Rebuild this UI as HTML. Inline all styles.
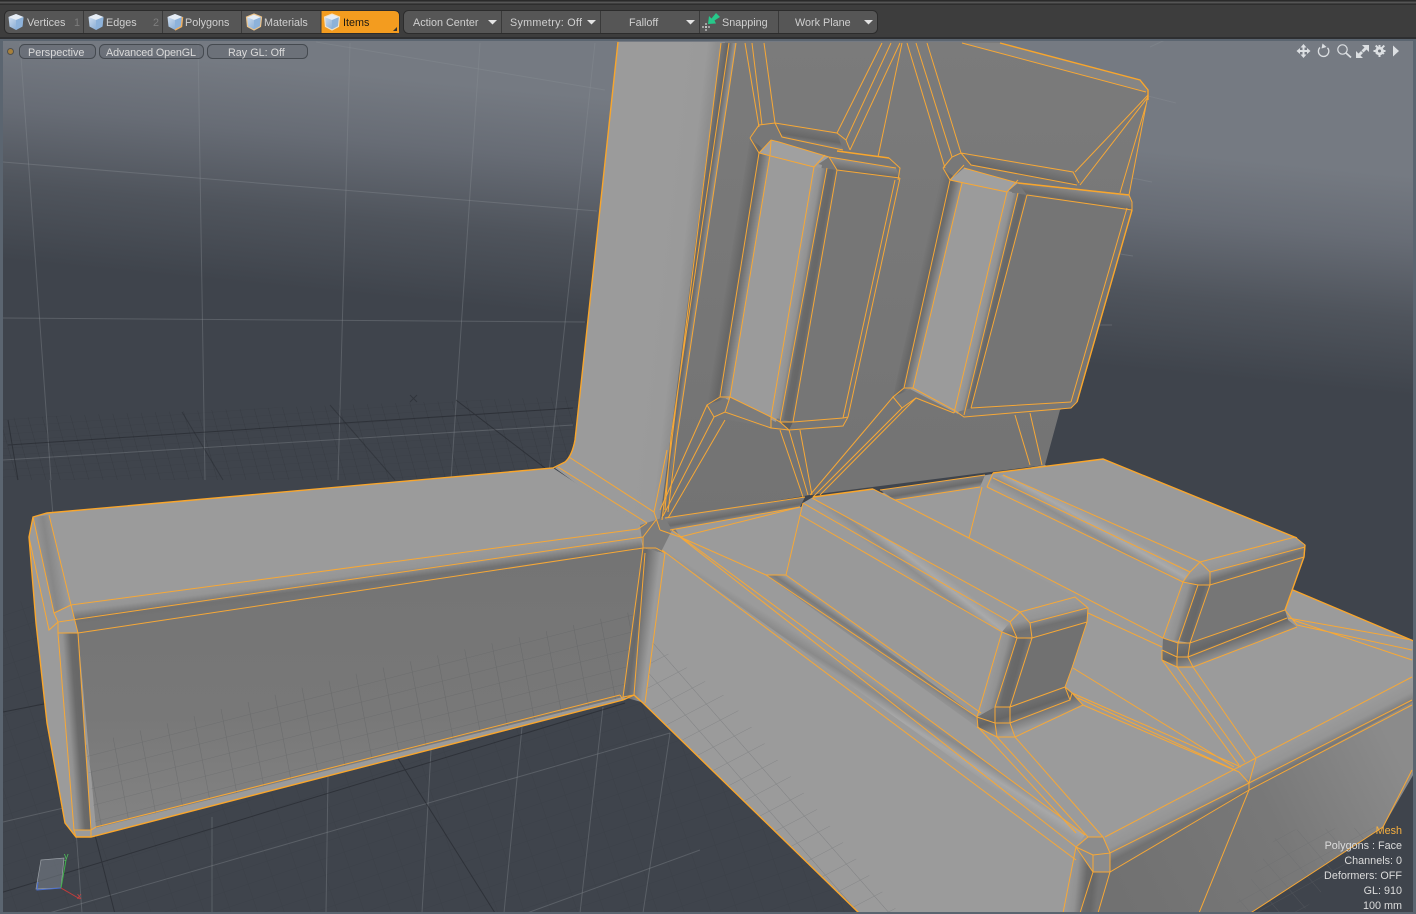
<!DOCTYPE html>
<html><head><meta charset="utf-8"><title>Modeling viewport</title>
<style>
html,body{margin:0;padding:0;background:#3a3a3a;overflow:hidden}
svg{display:block;font-family:"Liberation Sans",sans-serif;font-size:10.8px}
.w{fill:none;stroke:#f7a836;stroke-width:1}
.W{fill:none;stroke:#f9a62c;stroke-width:1.4}
.lg{stroke:#8a8f96;stroke-opacity:.36;stroke-width:1;fill:none}
.dk{stroke:#1d2025;stroke-width:1;fill:none;stroke-opacity:.5}
.r{fill:#dcdcdc;text-anchor:end}
</style></head><body>
<svg xmlns="http://www.w3.org/2000/svg" width="1416" height="914" viewBox="0 0 1416 914">
<defs>
<linearGradient id="bg" gradientUnits="userSpaceOnUse" x1="0" y1="40" x2="-21" y2="258">
<stop offset="0" stop-color="#757a82"/><stop offset=".3" stop-color="#676c75"/><stop offset=".65" stop-color="#4f545c"/><stop offset="1" stop-color="#3f444c"/>
</linearGradient>
<linearGradient id="col" gradientUnits="userSpaceOnUse" x1="660" y1="240" x2="694" y2="244">
<stop offset="0" stop-color="#9b9b9b"/><stop offset=".7" stop-color="#9a9a9a"/><stop offset="1" stop-color="#8e8e8e"/>
</linearGradient>
<linearGradient id="front" x1="0" y1="0" x2="0" y2="1"><stop offset="0" stop-color="#747474"/><stop offset=".6" stop-color="#787878"/><stop offset="1" stop-color="#838383"/></linearGradient>
<linearGradient id="wall" x1="0" y1="0" x2="0" y2="1"><stop offset="0" stop-color="#7b7b7b"/><stop offset="1" stop-color="#737373"/></linearGradient>
<linearGradient id="side" gradientUnits="userSpaceOnUse" x1="1120" y1="900" x2="1400" y2="760"><stop offset="0" stop-color="#717171"/><stop offset=".55" stop-color="#787878"/><stop offset="1" stop-color="#8b8b8b"/></linearGradient>

<linearGradient id="C"><stop offset="0" stop-color="#9b9b9b"/><stop offset=".4" stop-color="#959595"/><stop offset=".78" stop-color="#717171"/><stop offset="1" stop-color="#747474"/></linearGradient>
<linearGradient id="W"><stop offset="0" stop-color="#767676"/><stop offset=".4" stop-color="#666666"/><stop offset=".55" stop-color="#6f6f6f"/><stop offset="1" stop-color="#9b9b9b"/></linearGradient>
<linearGradient id="R"><stop offset="0" stop-color="#9b9b9b"/><stop offset=".3" stop-color="#929292"/><stop offset=".6" stop-color="#6a6a6a"/><stop offset=".8" stop-color="#676767"/><stop offset="1" stop-color="#757575"/></linearGradient>
<linearGradient id="H"><stop offset="0" stop-color="#9b9b9b"/><stop offset=".35" stop-color="#aaaaaa"/><stop offset=".7" stop-color="#8e8e8e"/><stop offset="1" stop-color="#9b9b9b"/></linearGradient>
<linearGradient id="K"><stop offset="0" stop-color="#9b9b9b"/><stop offset=".3" stop-color="#7a7a7a"/><stop offset=".6" stop-color="#8e8e8e"/><stop offset="1" stop-color="#9b9b9b"/></linearGradient>
<linearGradient id="B"><stop offset="0" stop-color="#717171"/><stop offset=".3" stop-color="#666666"/><stop offset=".85" stop-color="#9b9b9b"/><stop offset="1" stop-color="#9b9b9b"/></linearGradient>

<linearGradient id="s1" href="#C" gradientUnits="userSpaceOnUse" x1="350" y1="566" x2="353" y2="590"/>
<linearGradient id="s2" href="#R" gradientUnits="userSpaceOnUse" x1="62" y1="730" x2="88" y2="728"/>
<linearGradient id="s3b" gradientUnits="userSpaceOnUse" x1="628" y1="620" x2="652" y2="623"><stop offset="0" stop-color="#757575"/><stop offset=".38" stop-color="#696969"/><stop offset="1" stop-color="#9b9b9b"/></linearGradient>
<linearGradient id="s4" href="#W" gradientUnits="userSpaceOnUse" x1="694" y1="240" x2="708" y2="242"/>
<linearGradient id="b1l" href="#W" gradientUnits="userSpaceOnUse" x1="728" y1="273" x2="752" y2="277"/>
<linearGradient id="b1r" href="#R" gradientUnits="userSpaceOnUse" x1="793" y1="290" x2="816" y2="294"/>
<linearGradient id="b2l" href="#W" gradientUnits="userSpaceOnUse" x1="917" y1="285" x2="938" y2="290"/>
<linearGradient id="b2r" href="#R" gradientUnits="userSpaceOnUse" x1="981" y1="300" x2="1002" y2="305"/>
<linearGradient id="t1" gradientUnits="userSpaceOnUse" x1="862" y1="162" x2="860" y2="177"><stop offset="0" stop-color="#8e8e8e"/><stop offset=".7" stop-color="#6a6a6a"/><stop offset="1" stop-color="#757575"/></linearGradient>
<linearGradient id="t1b" gradientUnits="userSpaceOnUse" x1="808" y1="127" x2="805" y2="146"><stop offset="0" stop-color="#7a7a7a"/><stop offset=".55" stop-color="#686868"/><stop offset="1" stop-color="#8e8e8e"/></linearGradient>
<linearGradient id="t2" gradientUnits="userSpaceOnUse" x1="1080" y1="188" x2="1077" y2="206"><stop offset="0" stop-color="#8e8e8e"/><stop offset=".7" stop-color="#6a6a6a"/><stop offset="1" stop-color="#757575"/></linearGradient>
<linearGradient id="t2b" gradientUnits="userSpaceOnUse" x1="1020" y1="163" x2="1016" y2="182"><stop offset="0" stop-color="#7a7a7a"/><stop offset=".55" stop-color="#686868"/><stop offset="1" stop-color="#8e8e8e"/></linearGradient>
<linearGradient id="wb" gradientUnits="userSpaceOnUse" x1="735" y1="508" x2="737" y2="520"><stop offset="0" stop-color="#808080"/><stop offset=".55" stop-color="#6b6b6b"/><stop offset="1" stop-color="#929292"/></linearGradient>
<linearGradient id="wb2" gradientUnits="userSpaceOnUse" x1="932" y1="483" x2="934" y2="495"><stop offset="0" stop-color="#808080"/><stop offset=".55" stop-color="#6b6b6b"/><stop offset="1" stop-color="#929292"/></linearGradient>
<linearGradient id="h1" href="#H" gradientUnits="userSpaceOnUse" x1="918" y1="553" x2="903" y2="572"/>
<linearGradient id="h2" href="#H" gradientUnits="userSpaceOnUse" x1="1100" y1="519" x2="1088" y2="540"/>
<linearGradient id="k1" href="#K" gradientUnits="userSpaceOnUse" x1="884" y1="644" x2="873" y2="660"/>
<linearGradient id="k2" gradientUnits="userSpaceOnUse" x1="870" y1="678" x2="855" y2="702"><stop offset="0" stop-color="#9b9b9b"/><stop offset=".35" stop-color="#8a8a8a"/><stop offset=".7" stop-color="#a8a8a8"/><stop offset="1" stop-color="#9b9b9b"/></linearGradient>
<linearGradient id="fb" href="#C" gradientUnits="userSpaceOnUse" x1="1250" y1="761" x2="1265" y2="790"/>
<linearGradient id="cn" href="#R" gradientUnits="userSpaceOnUse" x1="1066" y1="890" x2="1098" y2="893"/>
<linearGradient id="e1l" href="#R" gradientUnits="userSpaceOnUse" x1="990" y1="670" x2="1021" y2="678"/>
<linearGradient id="e1t" href="#C" gradientUnits="userSpaceOnUse" x1="1046" y1="605" x2="1052" y2="630"/>
<linearGradient id="e1b" href="#B" gradientUnits="userSpaceOnUse" x1="1036" y1="697" x2="1046" y2="727"/>
<linearGradient id="e2l" href="#R" gradientUnits="userSpaceOnUse" x1="1172" y1="612" x2="1200" y2="620"/>
<linearGradient id="e2t" href="#C" gradientUnits="userSpaceOnUse" x1="1248" y1="550" x2="1255" y2="572"/>
<linearGradient id="e2b" href="#B" gradientUnits="userSpaceOnUse" x1="1235" y1="627" x2="1245" y2="655"/>
<linearGradient id="lc" gradientUnits="userSpaceOnUse" x1="36" y1="560" x2="62" y2="556"><stop offset="0" stop-color="#9b9b9b"/><stop offset=".5" stop-color="#878787"/><stop offset="1" stop-color="#9b9b9b"/></linearGradient>

<pattern id="g1" patternUnits="userSpaceOnUse" width="1" height="1" patternTransform="matrix(27 -7 3 16 85 740)"><path d="M0 0H1M0 0V1" stroke="#4c4f52" stroke-width=".04" fill="none"/></pattern>
<pattern id="g2" patternUnits="userSpaceOnUse" width="1" height="1" patternTransform="matrix(21 -11 14 16 650 640)"><path d="M0 0H1M0 0V1" stroke="#66686b" stroke-width=".04" fill="none"/></pattern>
<pattern id="g3" patternUnits="userSpaceOnUse" width="1" height="1" patternTransform="matrix(14 -1 2 7 0 420)"><path d="M0 0H1M0 0V1" stroke="#2b2f35" stroke-width=".08" fill="none"/></pattern>
<pattern id="g4" patternUnits="userSpaceOnUse" width="1" height="1" patternTransform="matrix(24 -8 5 15 0 700)"><path d="M0 0H1M0 0V1" stroke="#31353b" stroke-width=".04" fill="none"/></pattern>
<pattern id="g5" patternUnits="userSpaceOnUse" width="1" height="1" patternTransform="matrix(20 -11 12 14 1200 820)"><path d="M0 0H1M0 0V1" stroke="#65676a" stroke-width=".04" fill="none"/></pattern>
<linearGradient id="ic" x1="0" y1="0" x2="1" y2="1"><stop offset="0" stop-color="#d8e4f2"/><stop offset="1" stop-color="#6f9ccc"/></linearGradient>
<g id="cube"><path d="M0 -8 L7.500 -5 L6.500 4.500 L0 8 L-6.500 4.500 L-7.500 -5Z" fill="url(#ic)"/><path d="M-7.500 -5L0 -2L7.500 -5L0 -8Z" fill="#e6edf5"/><path d="M0 -2V8L6.500 4.500L7.500 -5Z" fill="#8db2da"/></g>
</defs>

<rect width="1416" height="914" fill="url(#bg)"/>
<!-- floor -->
<polygon points="3,418 580,396 580,480 3,480" fill="url(#g3)" opacity=".4"/>
<polygon points="0,600 640,640 860,914 0,914" fill="url(#g4)" opacity=".3"/>
<g class="lg">
<path d="M20 43L51 480M50 480L62 620M198 43L205 480M350 43L338 480M480 43L451 480M595 43L549 473"/>
<path d="M3 162L597 211M3 318L585 322M3 460L573 425M316 42L605 90"/>
<path d="M328 777L326 913M212 817L212 913M431 750L422 913M522 727L504 913M603 707L580 913M670 733L643 913M76 830L82 913"/>
<path d="M49 913L670 733M3 822L120 795M527 913L700 850M1150 47L1165 40M1148 96L1176 103M1127 177L1152 182M1120 254L1133 256M1100 325L1112 325"/>
</g>
<g class="dk">
<path d="M456 400L545 468M8 420L18 480M8 445L573 408"/>
<path d="M182 412L223 480M330 405L395 480" stroke-opacity=".35"/>
<path d="M3 712L54 702M0 893L625 703M397 757L495 913M95 835L115 914"/>
<path d="M410 395L417 402M417 395L410 402" stroke-opacity=".4"/>
</g>

<!-- back wall -->
<polygon points="725,42 1000,42 1145,82 1148,95 1129,195 1132,210 1077,402 1060,410 1045,465 810,495 662,520" fill="url(#wall)"/>
<polygon points="962,43 1000,43 1140,80 1148,92" fill="#858585"/>

<!-- column -->
<path d="M618 42L725 42L662 520L640 530L555 468L565 462Q572 456 575 440Z" fill="url(#col)"/>
<polygon points="721,43 736,43 677,437 665,510 660,520" fill="url(#s4)"/>

<!-- left arm -->
<path d="M33 517L47 513L553 468L640 525L656 548L634 695L623 700L91 837L76 837L65 823L47 723L36 623L29 537Z" fill="#9b9b9b"/>
<polygon points="78,633 643,548 623,697 96,828" fill="url(#front)"/>
<polygon points="85,745 350,675 640,610 623,697 96,828" fill="url(#g1)" opacity=".35"/>
<polygon points="71,605 638,529 643,548 78,633" fill="url(#s1)"/>
<polygon points="58,633 78,633 91,830 74,830" fill="url(#s2)"/>
<polygon points="33,517 49,515 71,605 54,613" fill="url(#lc)"/>

<!-- seat base -->
<path d="M665 530L1045 465L1293 590L1416 642L1416 700L1250 790L1110 870L1098 914L860 914L643 703Z" fill="#9b9b9b"/>
<polygon points="650,640 730,700 900,914 860,914 645,703" fill="url(#g2)" opacity=".55"/>
<polygon points="643,548 665,553 645,703 623,697" fill="url(#s3b)"/>
<polygon points="640,525 668,516 680,537 665,553 643,548" fill="#7c7c7c"/>
<!-- lower right side -->
<path d="M1110 872L1249 790L1416 700L1416 770L1383 827L1249 914L1098 914Z" fill="url(#side)"/>
<polygon points="1230,914 1280,830 1383,827 1300,914" fill="url(#g5)" opacity=".5"/>
<polygon points="1105,837 1256,758 1416,675 1416,700 1250,790 1110,872" fill="url(#fb)"/>
<polygon points="1076,847 1093,872 1110,872 1098,914 1063,914" fill="url(#cn)"/>
<polygon points="1076,847 1088,837 1103,837 1110,853 1110,872 1093,872" fill="#8c8c8c"/>
<!-- wall-seat crease -->
<polygon points="665,518 805,497 800,507 672,530" fill="url(#wb)"/>
<polygon points="880,490 985,475 980,487 895,500" fill="url(#wb2)"/>
<!-- slope creases -->
<polygon points="672,530 1085,835 1076,847 662,550" fill="url(#k2)"/>
<polygon points="766,575 786,575 981,713 977,727" fill="url(#k1)"/>

<!-- box 1 -->
<polygon points="750,138 759,125 775,123 837,133 850,150 889,158 900,168 898,180 848,417 843,426 789,430 771,428 714,417 707,405 720,397" fill="#777"/>
<polygon points="837,170 896,180 845,418 793,424" fill="#767676"/>
<polygon points="765,150 822,165 776,422 722,397" fill="#9b9b9b"/>
<polygon points="750,138 770,155 730,397 707,405" fill="url(#b1l)"/>
<polygon points="814,167 837,170 793,422 771,417" fill="url(#b1r)"/>
<polygon points="775,123 837,133 843,150 782,137" fill="url(#t1b)"/>
<polygon points="829,157 896,168 900,178 837,170" fill="url(#t1)"/>
<polygon points="771,140 829,157 814,167 759,153" fill="#a0a0a0"/>
<polygon points="730,397 771,417 771,428 725,412" fill="#7c7c7c"/>
<polygon points="780,422 793,422 789,430" fill="#5f5f5f"/>
<!-- box 2 -->
<polygon points="943,168 952,157 961,153 1073,172 1079,183 1129,195 1132,202 1132,210 1077,402 1071,408 964,417 954,413 916,398 902,408 893,397 904,388" fill="#787878"/>
<polygon points="1027,195 1132,209 1077,402 971,410" fill="#757575"/>
<polygon points="955,178 1012,192 958,414 908,388" fill="#9b9b9b"/>
<polygon points="943,168 962,183 913,388 893,397" fill="url(#b2l)"/>
<polygon points="1007,192 1027,195 971,408 954,413" fill="url(#b2r)"/>
<polygon points="961,153 1073,172 1077,185 971,165" fill="url(#t2b)"/>
<polygon points="1018,183 1129,195 1132,210 1027,195" fill="url(#t2)"/>
<polygon points="964,168 1018,183 1007,192 950,180" fill="#a0a0a0"/>

<!-- block 2 -->
<polygon points="993,473 1103,459 1297,538 1305,545 1304,557 1285,610 1288,620 1297,625 1193,667 1177,667 1162,660 1163,638 969,538 982,487" fill="#9a9a9a"/>
<polygon points="1003,475 1200,562 1183,582 987,487 993,478" fill="url(#h2)"/>
<polygon points="1210,585 1304,557 1285,610 1190,643" fill="#767676"/>
<polygon points="1190,572 1200,562 1295,537 1305,545 1304,557 1210,585 1198,585 1183,582" fill="url(#e2t)"/>
<polygon points="1183,582 1198,585 1210,585 1190,643 1163,638" fill="url(#e2l)"/>
<polygon points="1178,643 1190,643 1285,610 1288,620 1297,627 1193,667 1177,667 1162,660 1163,638" fill="url(#e2b)"/>
<!-- block 1 -->
<polygon points="813,497 873,489 1075,597 1088,608 1087,622 1072,668 1065,687 1072,693 1083,705 1015,737 997,737 978,727 977,717 786,575 803,503" fill="#999999"/>
<polygon points="812,498 1020,612 1002,632 800,515 803,503" fill="url(#h1)"/>
<polygon points="1032,638 1087,622 1065,687 1010,707" fill="#717171"/>
<polygon points="1010,622 1020,612 1075,597 1088,608 1087,622 1032,638 1017,638 1002,632" fill="url(#e1t)"/>
<polygon points="1002,632 1017,638 1032,638 1010,707 977,717" fill="url(#e1l)"/>
<polygon points="995,707 1010,707 1065,687 1072,693 1083,705 1015,737 997,737 978,727 977,717" fill="url(#e1b)"/>

<!-- wires: wall -->
<g class="w">
<path d="M721 43L662 520M729 43L671 437L665 510M736 43L677 437L668 512"/>
<path d="M745 43L759 127M752 43L762 125M764 43L775 123M882 43L837 133M891 43L846 140M900 43L850 150M902 43L878 157"/>
<path d="M907 43L945 168M916 43L952 157M927 43L961 153M962 43L1146 92M1148 95L1075 172M1148 97L1080 185M1146 105L1120 193"/>
<!-- box1 -->
<path d="M750 138L759 125L775 123L837 133L846 140L850 150M750 138L759 153L814 167M775 123L782 137L843 150"/>
<path d="M759 153L771 140L779 142L829 157L896 168M771 141L770 155M814 167L825 155M837 170L900 178M829 157L837 170M889 158L900 168L898 180"/>
<path d="M759 153L720 397M770 155L730 397M814 167L771 417M827 168L780 422M837 170L793 422M895 180L843 418M900 178L848 417"/>
<path d="M730 397L771 417L780 422L793 422L843 418L848 417M720 397L707 405L714 417L725 412L771 428L789 430L843 426L848 417M720 397L730 397M725 412L730 397M771 417L771 428M780 422L789 430"/>
<!-- box2 -->
<path d="M943 168L952 157L961 153L1073 172L1079 183M943 168L950 180L1007 192M961 153L971 165L1077 185M964 165L950 180"/>
<path d="M964 168L1018 183L1129 195M1007 192L1018 180M1027 195L1132 210M1129 195L1132 202L1132 210"/>
<path d="M950 180L904 388M962 183L913 388M1007 192L954 413M1018 193L964 415M1027 195L971 408M1132 210L1077 402M1127 208L1071 402"/>
<path d="M913 388L954 410L964 417L1071 408L1077 402M904 388L893 397L902 408L916 398L954 413M904 388L913 388M971 408L1071 402"/>
<!-- below boxes -->
<path d="M714 417L663 516M725 420L668 518M707 405L660 510M780 430L803 497M789 430L808 495M800 430L812 495M893 397L810 495M902 408L813 497M916 398L820 495M1015 415L1030 465M1030 413L1042 465"/>
<path d="M665 518L805 497M670 530L800 507M880 490L985 475M895 500L980 487"/>
<!-- left arm -->
<path d="M558 467L647 523M569 457L654 512L667 450M654 512L660 530"/>
<path d="M49 515L71 605L638 529L647 523M33 517L54 613L71 605M29 537L49 630L58 622M54 613L58 622L643 537L656 520M58 633L78 633L643 548L656 548M58 622L58 633M71 605L78 633"/>
<path d="M78 633L91 830L96 827L620 695M58 633L74 830L76 837M74 830L91 830L91 837"/>
<path d="M643 537L643 548L623 697L634 695L645 553M620 695L623 700M623 697L634 695"/>
<!-- seat -->
<path d="M660 530L680 537L1076 847M656 548L665 553L645 703M662 550L1076 860M672 530L1085 835M680 537L800 507M766 575L786 575L803 503M766 575L680 537"/>
<path d="M766 575L977 717M786 575L981 713"/>
<path d="M873 489L895 500M895 500L969 538L1163 638M1088 613L1162 647"/>
<!-- block1 -->
<path d="M812 498L1020 612M803 503L1010 622M800 515L1002 632"/>
<path d="M1020 612L1075 597L1088 608L1087 622L1072 668L1065 687M1010 622L1020 612M1010 622L1017 638M1020 612L1030 623L1087 608M1030 623L1032 638L1087 622M1002 632L1017 638L1032 638"/>
<path d="M1002 632L977 717M1017 638L995 707M1032 638L1010 707L1065 687M995 707L1010 707L1010 723L995 723L977 717M995 707L995 723M1010 723L1070 700L1065 687M977 727L997 737L1015 737L1083 705L1072 693L1065 687M977 717L978 727M995 723L997 737M1010 723L1015 737M1072 693L1070 700"/>
<!-- lines to corners -->
<path d="M1015 737L1103 837M997 737L1088 837M978 727L1076 833M1083 705L1239 772M1072 693L1241 767M1078 698L1235 770M1073 668L1234 767"/>
<path d="M1162 660L1239 765M1193 667L1256 758M1177 667L1245 762M1193 667L1297 627M1188 657L1287 618M1285 610L1297 625L1412 650M1293 620L1412 660M1288 618L1412 640"/>
<!-- block2 -->
<path d="M1003 475L1200 562M993 478L1190 572M987 487L1183 582M982 487L969 538M993 473L987 487"/>
<path d="M1200 562L1295 537L1305 545L1304 557M1190 572L1200 562L1210 572L1305 547M1210 572L1210 585L1304 557M1183 582L1198 585L1210 585M1190 572L1183 582"/>
<path d="M1183 582L1163 638M1198 585L1178 643M1210 585L1190 643L1285 610M1163 638L1178 643L1190 643L1188 657L1177 657L1162 650M1178 643L1177 657M1162 650L1162 660L1177 667L1193 667M1177 657L1177 667M1188 657L1193 667"/>
<!-- front corner -->
<path d="M1076 847L1088 837L1103 837L1110 853L1249 783L1412 700M1105 837L1256 758L1412 677M1088 837L1076 847L1093 872L1110 872L1249 790L1412 705M1093 855L1110 853L1110 872M1076 847L1093 855L1093 872M1103 837L1110 853"/>
<path d="M1076 847L1063 913M1093 872L1080 913M1110 872L1098 913M1256 758L1249 783L1249 790L1199 913M1239 772L1249 783"/>
</g>
<!-- bold silhouette -->
<g class="W">
<path d="M618 42L575 440Q572 456 565 462L553 468L47 513L33 517L29 537L36 623L47 723L65 823L76 837L91 837L623 700L634 695L643 703L860 914"/>
<path d="M1000 43L1140 80L1148 90L1148 100M813 497L873 489M993 473L1103 459L1297 538M1305 545L1304 557L1285 610M1132 210L1077 402"/>
<path d="M837 151L889 158M1018 183L1129 195M1293 590L1416 642"/>
</g>
<path d="M1383 827L1249 914M1412 770L1383 827M1148 95L1129 195" stroke="#f7a836" fill="none"/>

<!-- gizmo -->
<polygon points="41,860 64,858 61,888 36,889" fill="#7b838c" fill-opacity=".55" stroke="#9aa0a6" stroke-width=".7"/>
<path d="M61 888L66 860" stroke="#3fb24a" fill="none"/><path d="M61 888L80 899" stroke="#c23b3b" fill="none"/><path d="M61 888L37 890L38 882" stroke="#4a6fd0" fill="none"/>
<text x="64" y="859" font-size="9" fill="#4fc05a">y</text><text x="77" y="899" font-size="9" fill="#c84444">x</text>

<!-- toolbar -->
<rect width="1416" height="39" fill="#3d3d3d"/>
<rect width="1416" height="1" fill="#2a2a2a"/><rect y="2" width="1416" height="1" fill="#555"/><rect y="4" width="1416" height="1" fill="#2e2e2e"/>
<rect y="37" width="1416" height="2" fill="#2e2f31"/><rect y="39" width="1416" height="2" fill="#5b6570"/>
<rect x="0" y="41" width="3" height="873" fill="#5b6570"/><rect x="1413" y="41" width="3" height="873" fill="#5b6570"/><rect y="912" width="1416" height="2" fill="#5b6570"/>
<rect x="4.500" y="10.500" width="395" height="23" rx="5" fill="#565656" stroke="#2c2c2c"/>
<path d="M321 11H394Q399 11 399 16V33H321Z" fill="#f39c1f"/>
<path d="M397 27V31H393Z" fill="#333"/>
<path d="M83.500 11V33M162.500 11V33M241.500 11V33M321 11V33" stroke="#3a3a3a"/>
<rect x="403.500" y="10.500" width="474" height="23" rx="5" fill="#565656" stroke="#2c2c2c"/>
<path d="M501.500 11V33M600.500 11V33M699.500 11V33M778.500 11V33" stroke="#3a3a3a"/>
<use href="#cube" x="16" y="22"/><use href="#cube" x="96" y="22"/><use href="#cube" x="175" y="22"/><use href="#cube" x="254" y="22"/><use href="#cube" x="332" y="22"/>
<path d="M175 30L181.500 26.500L182.500 17" stroke="#f0b060" stroke-width="1.500" fill="none"/>
<path d="M246.500 17L254 14L261.500 17L260.500 26.500L254 30L247.500 26.500Z" stroke="#eec48a" stroke-width="1.200" fill="none"/>
<path d="M324.500 17L332 14L339.500 17L338.500 26.500L332 30L325.500 26.500Z" stroke="#f4e2c4" stroke-width="1.200" fill="none"/>
<g fill="#d0d0d0"><text x="27" y="26">Vertices</text><text x="106" y="26">Edges</text><text x="185" y="26">Polygons</text><text x="264" y="26">Materials</text></g>
<text x="343" y="26" fill="#1e1a12">Items</text>
<text x="74" y="26" fill="#7e7e7e">1</text><text x="153" y="26" fill="#7e7e7e">2</text>
<g fill="#d0d0d0"><text x="413" y="26">Action Center</text><text x="510" y="26" textLength="72">Symmetry: Off</text><text x="629" y="26">Falloff</text><text x="722" y="26">Snapping</text><text x="795" y="26">Work Plane</text></g>
<g fill="#e4e4e4"><path d="M488 20H497L492.500 24.500Z"/><path d="M587 20H596L591.500 24.500Z"/><path d="M686 20H695L690.500 24.500Z"/><path d="M864 20H873L868.500 24.500Z"/></g>
<polygon points="708,24 709,16 711.500,18.500 716,13 720,17 714.500,20.500 716,23.500" fill="#27c88a"/>
<path d="M706 23V31M702 27H711" stroke="#e8e8e8" stroke-dasharray="2 1" fill="none"/>

<!-- viewport bar -->
<circle cx="10.500" cy="51.500" r="3" fill="#a8803a" stroke="#50504e"/>
<g fill="#646a72" fill-opacity=".55" stroke="#454a50">
<rect x="19.500" y="44.500" width="76" height="14" rx="5"/><rect x="99.500" y="44.500" width="104" height="14" rx="5"/><rect x="207.500" y="44.500" width="100" height="14" rx="5"/>
</g>
<g fill="#dadada"><text x="28" y="56">Perspective</text><text x="106" y="56" textLength="90">Advanced OpenGL</text><text x="228" y="56">Ray GL: Off</text></g>
<!-- nav icons -->
<g fill="#dcdfe2" stroke="none">
<path d="M1303.500 44L1306.500 47.500H1304.500V50H1307V48L1310.500 51L1307 54V52H1304.500V54.500H1306.500L1303.500 58L1300.500 54.500H1302.500V52H1300V54L1296.500 51L1300 48V50H1302.500V47.500H1300.500Z"/>
<path d="M1369 45V52L1366.500 49.500L1363.500 52.500L1361.500 50.500L1364.500 47.500L1362 45Z"/>
<path d="M1356 58V51L1358.500 53.500L1361 51L1363 53L1360.500 55.500L1363 58Z"/>
<path d="M1393 45.500L1399 51L1393 56.500Z"/>
<circle cx="1379.500" cy="51" r="4.300"/>
<path d="M1378.500 45h2v12h-2zM1373.500 50h12v2h-12z"/>
<path d="M1375 46.300l1.400-1.400 8.200 8.300-1.400 1.400zM1383.600 44.900l1.400 1.400-8.300 8.200-1.400-1.400z"/>
</g>
<circle cx="1379.500" cy="51" r="1.500" fill="#6d727a"/>
<path d="M1320 47.500a5.200 5.200 0 1 0 7.500 .3" fill="none" stroke="#dcdfe2" stroke-width="1.300"/>
<path d="M1322.500 43.500L1326.500 47L1321.500 48.500Z" fill="#dcdfe2"/>
<circle cx="1342.500" cy="49.500" r="4.700" fill="none" stroke="#dcdfe2" stroke-width="1.200"/>
<path d="M1346 53L1351 57.500" stroke="#dcdfe2" stroke-width="1.800" fill="none"/>

<!-- info -->
<text x="1402" y="834" class="r" style="fill:#f7b040">Mesh</text>
<text x="1402" y="849" class="r">Polygons : Face</text>
<text x="1402" y="864" class="r">Channels: 0</text>
<text x="1402" y="879" class="r">Deformers: OFF</text>
<text x="1402" y="894" class="r">GL: 910</text>
<text x="1402" y="909" class="r">100 mm</text>
</svg>
</body></html>
